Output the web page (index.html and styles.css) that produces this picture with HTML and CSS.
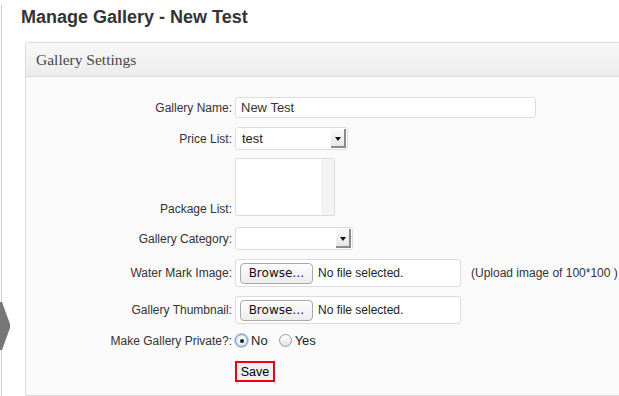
FILE: index.html
```html
<!DOCTYPE html>
<html>
<head>
<meta charset="utf-8">
<link rel="stylesheet" href="styles.css">
</head>
<body>
<div class="page">
  <svg class="side-arrow" width="10" height="48" viewBox="0 0 10 48"><polygon points="0,0 2,0 10,22 10,26 2,48 0,48" fill="#777"/></svg>
  <h1 class="title">Manage Gallery - New Test</h1>
  <div class="panel">
    <div class="panel-head">Gallery Settings</div>
    <div class="panel-body">
      <div class="row">
        <label class="lbl">Gallery Name:</label>
        <input class="text-in" type="text" value="New Test">
      </div>
      <div class="row row-gap">
        <label class="lbl">Price List:</label>
        <div class="sel sel-price"><span class="sel-text">test</span><span class="sel-btn"><span class="tri"></span></span></div>
      </div>
      <div class="row row-list">
        <label class="lbl lbl-bottom">Package List:</label>
        <div class="listbox"><span class="list-track"></span></div>
      </div>
      <div class="row row-cat">
        <label class="lbl">Gallery Category:</label>
        <div class="sel sel-cat"><span class="sel-text"></span><span class="sel-btn"><span class="tri"></span></span></div>
      </div>
      <div class="row row-gap">
        <label class="lbl">Water Mark Image:</label>
        <div class="file"><span class="browse">Browse…</span><span class="nofile">No file selected.</span></div>
        <span class="hint">(Upload image of 100*100 )</span>
      </div>
      <div class="row row-gap">
        <label class="lbl">Gallery Thumbnail:</label>
        <div class="file"><span class="browse">Browse…</span><span class="nofile">No file selected.</span></div>
      </div>
      <div class="row row-gap">
        <label class="lbl">Make Gallery Private?:</label>
        <span class="radio radio-on"><span class="dot"></span></span><span class="opt">No</span>
        <span class="radio radio-off"></span><span class="opt">Yes</span>
      </div>
      <div class="row row-save">
        <span class="lbl"></span>
        <span class="save-wrap"><span class="save">Save</span></span>
      </div>
    </div>
  </div>
</div>
</body>
</html>
```
FILE: styles.css
```css
html, body {
  margin: 0;
  padding: 0;
  background: #fff;
  overflow: hidden;
}
body {
  font-family: "Liberation Sans", Arial, sans-serif;
  color: #333;
}
.page {
  position: relative;
  margin-left: 1px;
  border-left: 1px solid #cbcbcb;
  min-height: 396px;
  padding-left: 23px;
  box-sizing: border-box;
}
.side-arrow {
  position: absolute;
  left: -2px;
  top: 297px;
}
.title {
  margin: 5px 0 13px -4px;
  font-size: 18px;
  line-height: 24px;
  font-weight: bold;
  color: #333;
}
.panel {
  border: 1px solid #dcdcdc;
  border-right: none;
  border-radius: 3px 0 0 3px;
  background: #fafafa;
}
.panel-head {
  height: 34px;
  box-sizing: border-box;
  border-bottom: 1px solid #d9d9d9;
  background: linear-gradient(#f8f8f8, #ececec);
  font-family: "Liberation Serif", Georgia, serif;
  font-size: 15.5px;
  line-height: 34px;
  color: #464646;
  padding-left: 10px;
}
.panel-body {
  padding: 20px 0 13px 0;
}
.row {
  display: flex;
  align-items: center;
  font-size: 12px;
}
.row-gap { margin-top: 9px; }
.row-list { margin-top: 8px; align-items: flex-end; }
.row-cat { margin-top: 11px; }
.row-save { margin-top: 13px; }
.lbl {
  width: 206px;
  flex: none;
  text-align: right;
  margin-right: 3px;
  color: #333;
  line-height: 14px;
}
.lbl-bottom {
  margin-bottom: 0;
}
.text-in {
  width: 301px;
  height: 21px;
  box-sizing: border-box;
  border: 1px solid #dcdcdc;
  border-radius: 3px;
  background: #fff;
  font-family: "Liberation Sans", Arial, sans-serif;
  font-size: 13px;
  color: #333;
  padding: 0 5px;
  margin: 0;
}
.sel {
  display: flex;
  align-items: center;
  height: 23px;
  box-sizing: border-box;
  border: 1px solid #dcdcdc;
  border-radius: 3px;
  background: #fff;
  padding: 0 1px 0 6px;
}
.sel-price { width: 113px; }
.sel-cat { width: 118px; }
.sel-text {
  flex: 1;
  font-size: 13px;
  color: #222;
}
.sel-btn {
  width: 15px;
  height: 19px;
  box-sizing: border-box;
  border-right: 2px solid #8a8a8a;
  border-bottom: 2px solid #8a8a8a;
  background: linear-gradient(#fbfbfb, #e6e6e6);
  display: flex;
  align-items: center;
  justify-content: center;
  padding-top: 2px;
}
.tri {
  width: 0;
  height: 0;
  border-left: 3px solid transparent;
  border-right: 3px solid transparent;
  border-top: 4px solid #111;
}
.listbox {
  width: 100px;
  height: 58px;
  box-sizing: border-box;
  border: 1px solid #dcdcdc;
  border-radius: 2px;
  background: #fff;
  display: flex;
  justify-content: flex-end;
}
.list-track {
  width: 11px;
  background: #f4f4f4;
  border-left: 1px solid #ececec;
}
.file {
  width: 226px;
  height: 28px;
  box-sizing: border-box;
  border: 1px solid #dcdcdc;
  border-radius: 3px;
  background: #fff;
  display: flex;
  align-items: center;
  padding-left: 4px;
}
.browse {
  width: 73px;
  height: 21px;
  box-sizing: border-box;
  border: 1px solid #a9a9a9;
  border-radius: 4px;
  background: linear-gradient(#fdfdfd, #ececec);
  font-family: "DejaVu Sans", "Liberation Sans", sans-serif;
  font-size: 12px;
  color: #111;
  display: flex;
  align-items: center;
  justify-content: center;
}
.nofile {
  margin-left: 5px;
  font-size: 12px;
  color: #222;
}
.hint {
  margin-left: 10px;
  font-size: 12px;
  color: #333;
}
.radio {
  width: 13px;
  height: 13px;
  box-sizing: border-box;
  border-radius: 50%;
  display: flex;
  align-items: center;
  justify-content: center;
  flex: none;
}
.radio-on {
  border: 1px solid #6e8fb8;
  background: radial-gradient(circle at 50% 40%, #ffffff, #cfe0f3);
  box-shadow: 0 0 0 1px #b6cde8;
}
.radio-off {
  border: 1px solid #9a9a9a;
  background: linear-gradient(#ffffff, #e3e3e3);
  margin-left: 11px;
}
.dot {
  width: 4px;
  height: 4px;
  border-radius: 50%;
  background: #222;
}
.opt {
  margin-left: 3px;
  font-size: 13px;
  color: #222;
}
.save-wrap {
  border: 2px solid #ee0010;
  display: inline-flex;
}
.save {
  width: 36px;
  height: 17px;
  background: #efefef;
  font-size: 12.5px;
  color: #000;
  display: flex;
  align-items: center;
  justify-content: center;
}
```
